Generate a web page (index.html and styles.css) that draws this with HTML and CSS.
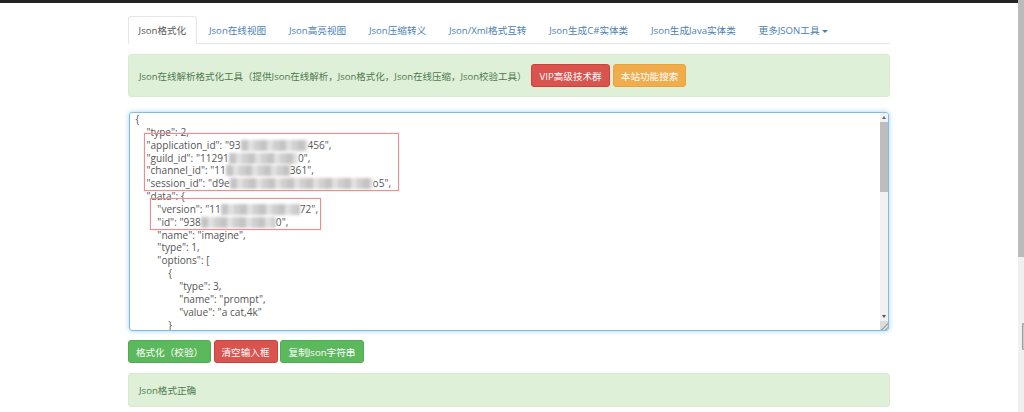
FILE: index.html
```html
<!DOCTYPE html>
<html lang="zh-CN">
<head>
<meta charset="utf-8">
<title>Json格式化</title>
<link rel="stylesheet" href="styles.css">
</head>
<body>
<div class="page">
  <div class="topbar"></div>
  <main class="container">
    <nav class="tabs">
      <a class="tab active">Json格式化</a>
      <a class="tab">Json在线视图</a>
      <a class="tab">Json高亮视图</a>
      <a class="tab">Json压缩转义</a>
      <a class="tab">Json/Xml格式互转</a>
      <a class="tab">Json生成C#实体类</a>
      <a class="tab">Json生成Java实体类</a>
      <a class="tab">更多JSON工具<span class="caret"></span></a>
    </nav>
    <section class="alert intro">
      <span class="intro-text">Json在线解析格式化工具（提供Json在线解析，Json格式化，Json在线压缩，Json校验工具）</span>
      <a class="btn danger">VIP高级技术群</a>
      <a class="btn warning">本站功能搜索</a>
    </section>
    <div class="editor">
      <div class="code-wrap">
<pre class="code">{
    "type": 2,
    "application_id": "93<span class="smear s1"></span>456",
    "guild_id": "11291<span class="smear s2"></span>0",
    "channel_id": "11<span class="smear s3"></span>361",
    "session_id": "d9e<span class="smear s4"></span>o5",
    "data": {
        "version": "11<span class="smear s5"></span>72",
        "id": "938<span class="smear s6"></span>0",
        "name": "imagine",
        "type": 1,
        "options": [
            {
                "type": 3,
                "name": "prompt",
                "value": "a cat,4k"
            }</pre>
        <div class="mark mark-a"></div>
        <div class="mark mark-b"></div>
      </div>
      <div class="vscroll">
        <span class="arrow up"></span>
        <span class="thumb"></span>
        <span class="track"></span>
        <span class="arrow down"></span>
        <span class="grip"></span>
      </div>
    </div>
    <div class="actions">
      <a class="btn success wide">格式化（校验）</a>
      <a class="btn danger">清空输入框</a>
      <a class="btn success">复制Json字符串</a>
    </div>
    <section class="alert result">Json格式正确</section>
  </main>
</div>
<aside class="pagebar"><span class="pagebar-thumb"></span><span class="pagebar-handle"></span></aside>
</body>
</html>
```
FILE: styles.css
```css
* { box-sizing: border-box; }
html, body { margin: 0; height: 100%; }
body {
  display: flex;
  height: 412px;
  overflow: hidden;
  background: #fff;
  font-family: "Open Sans", "Noto Sans CJK SC", sans-serif;
  font-size: 9.6px;
  color: #555;
}
.page { flex: 1; min-width: 0; }
.topbar { height: 3px; background: #222; }
.container { width: 762px; margin-left: 128px; padding-top: 13px; }

.tabs { display: flex; height: 28px; border-bottom: 1px solid #e6e6e6; }
.tab {
  height: 28px;
  margin-right: 1.6px;
  padding: 0 9.6px;
  line-height: 27px;
  border: 1px solid transparent;
  color: #4a7fb5;
  white-space: nowrap;
}
.tab.active {
  color: #555;
  background: #fff;
  border-color: #e6e6e6 #e6e6e6 #fff;
  border-radius: 3px 3px 0 0;
}
.caret {
  display: inline-block;
  margin-left: 2px;
  vertical-align: middle;
  border-top: 3px solid #4a7fb5;
  border-left: 3px solid transparent;
  border-right: 3px solid transparent;
}

.alert {
  display: flex;
  align-items: center;
  background: #dff0d8;
  color: #4d7a4e;
  border: 1px solid #d8ebd0;
  border-radius: 3px;
  padding: 0 10px;
}
.intro { height: 43px; margin-top: 10px; }
.intro-text { margin-right: 1.5px; font-size: 9.5px; white-space: nowrap; }
.intro .btn { margin-left: 3px; }
.intro .btn.danger { width: 79px; }
.intro .btn.warning { width: 73px; }
.result { height: 34px; margin-top: 10px; }

.btn {
  display: flex;
  align-items: center;
  justify-content: center;
  height: 23px;
  padding: 0 7px;
  border: 1px solid transparent;
  border-radius: 3px;
  color: #fff;
  white-space: nowrap;
}
.danger { background: #d9534f; border-color: #d43f3a; }
.warning { background: #f0ad4e; border-color: #eea236; }
.success { background: #5cb85c; border-color: #4cae4c; }

.editor {
  display: flex;
  height: 219px;
  margin: 15px 1px 0;
  border: 1px solid #7fbcec;
  border-radius: 3px;
  box-shadow: 0 0 5px rgba(102, 175, 233, .6);
  overflow: hidden;
}
.code-wrap { position: relative; flex: 1; overflow: hidden; }
.code {
  margin: 0;
  padding: 0 0 0 5.6px;
  font: 10.1px/12.85px "Open Sans", "Noto Sans CJK SC", sans-serif;
  color: #555;
  white-space: pre;
  word-spacing: 0.1px;
}
.smear {
  display: inline-block;
  height: 11px;
  vertical-align: -2px;
  background: repeating-linear-gradient(90deg, #c4c4c4 0 7px, #e0e0e0 7px 13px, #cfcfcf 13px 19px);
  filter: blur(1.8px);
}
.s1 { width: 67px; }
.s2 { width: 69px; }
.s3 { width: 64px; }
.s4 { width: 143px; }
.s5 { width: 79px; }
.s6 { width: 75px; }
.mark {
  position: absolute;
  border: 1px solid #f28b8b;
  box-shadow: 0 0 1px #f9b5b5;
  pointer-events: none;
}
.mark-a { left: 14px; top: 20px; width: 255px; height: 58px; }
.mark-b { left: 20px; top: 85px; width: 171px; height: 32px; }

.vscroll { display: flex; flex-direction: column; flex: none; width: 8px; background: #f1f1f1; }
.arrow { position: relative; flex: none; height: 9px; }
.arrow::after {
  content: "";
  position: absolute;
  left: 2px;
  top: 3px;
  border-left: 2px solid transparent;
  border-right: 2px solid transparent;
}
.up::after { border-bottom: 3px solid #666; }
.down::after { border-top: 3px solid #555; }
.thumb { flex: none; height: 70px; background: #bdbdbd; }
.track { flex: 1; }
.grip {
  flex: none;
  height: 9px;
  background: linear-gradient(135deg, #dcdcdc 55%, #aaa 55% 65%, #dcdcdc 65% 78%, #aaa 78%);
}

.actions { display: flex; gap: 2.5px; margin-top: 9px; }
.actions .wide { width: 83px; }
.actions .danger { width: 64px; }
.actions .success:last-child { width: 84px; }

.pagebar { position: relative; flex: none; width: 6px; background: #f0f0f0; }
.pagebar-thumb { display: block; height: 257px; background: #bbb; }
.pagebar-handle {
  position: absolute;
  right: 0;
  top: 323px;
  width: 2px;
  height: 27px;
  background: #ccc;
  border: 1px solid #999;
  border-right: 0;
  border-radius: 2px 0 0 2px;
}
```
